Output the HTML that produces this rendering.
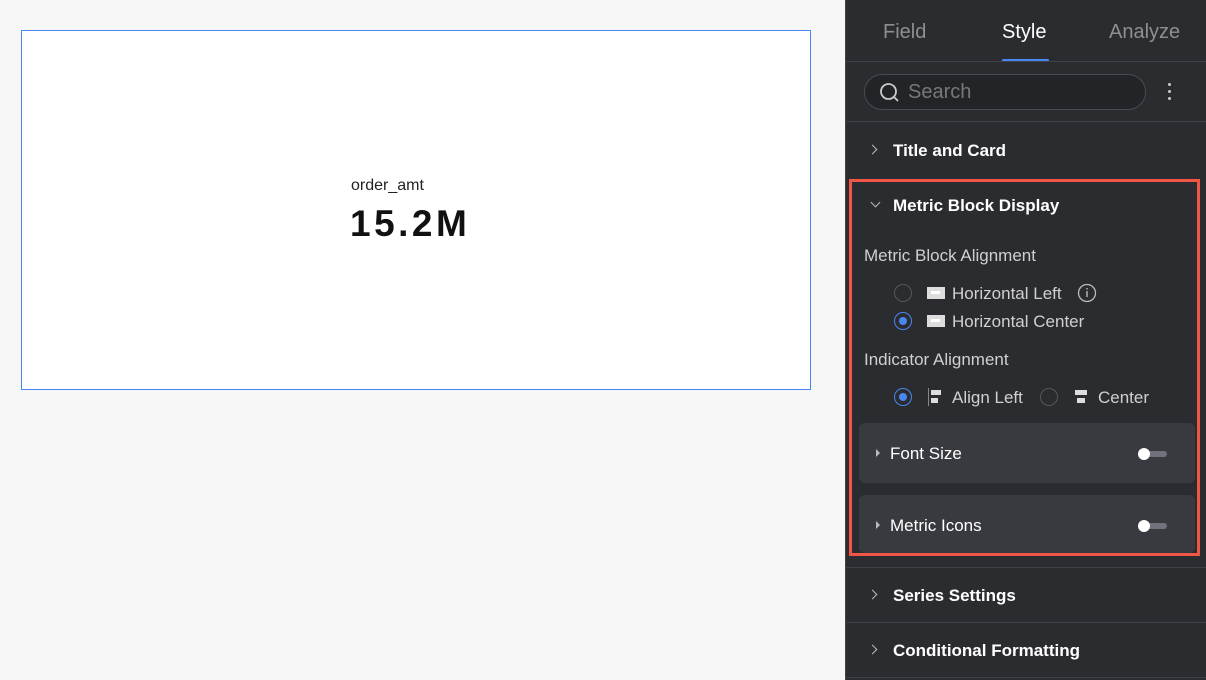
<!DOCTYPE html>
<html><head><style>
*{margin:0;padding:0;box-sizing:border-box}
body{width:1206px;height:680px;background:#f7f7f7;font-family:"Liberation Sans",sans-serif;position:relative;overflow:hidden}
.card{position:absolute;left:21px;top:30px;width:790px;height:360px;background:#fff;border:1px solid #4a86f0}
.lbl{position:absolute;left:329px;top:146px;font-size:16px;color:#222}
.val{position:absolute;left:328px;top:172px;font-size:37px;font-weight:bold;color:#111;letter-spacing:3.5px}
.panel{position:absolute;left:845px;top:0;width:361px;height:680px;background:#2b2c30;border-left:1px solid #444}
.abs{position:absolute}
.t{color:#fff;font-size:17px;font-weight:bold}
.g{color:#d0d0d2;font-size:17px}
.line{position:absolute;left:0;width:361px;height:1px;background:#404146}
.chev{position:absolute;width:7px;height:7px;border-right:1.5px solid #bbb;border-bottom:1.5px solid #bbb}
.radio{position:absolute;width:18px;height:18px;border-radius:50%;border:1px solid #55565a}
.radio.on{border:1.5px solid #4a86f0}
.radio.on:after{content:"";position:absolute;left:3.5px;top:3.5px;width:8px;height:8px;border-radius:50%;background:#4a86f0}
.sub{position:absolute;left:13px;width:336px;height:60px;background:#393a3f;border-radius:6px}
.tog{position:absolute;width:28px;height:6px;border-radius:3px;background:#70727c}
.tog:before{content:"";position:absolute;left:-1px;top:-3px;width:12px;height:12px;border-radius:50%;background:#fff}
.tri{position:absolute;width:0;height:0;border-left:4px solid #bbb;border-top:4px solid transparent;border-bottom:4px solid transparent}
.ico{position:absolute;width:18px;height:12px;background:#ddd}
.ico:after{content:"";position:absolute;left:4px;top:4px;width:9px;height:3px;background:#fff}
</style></head><body>
<div class="card"><div class="lbl">order_amt</div><div class="val">15.2M</div></div>
<div class="panel">
<div class="abs" style="left:37px;top:21px;font-size:20px;color:#8e8f93">Field</div>
<div class="abs" style="left:156px;top:21px;font-size:20px;color:#fff">Style</div>
<div class="abs" style="left:263px;top:21px;font-size:20px;color:#8e8f93">Analyze</div>
<div class="abs" style="left:156px;top:59px;width:47px;height:3px;background:#4a86f0;border-radius:2px"></div>
<div class="line" style="top:61px"></div>
<div class="abs" style="left:18px;top:74px;width:282px;height:36px;border:1px solid #4a4b50;border-radius:18px;background:#232428"></div>
<svg class="abs" style="left:33px;top:82px" width="22" height="22" viewBox="0 0 22 22"><circle cx="9.5" cy="9.5" r="7.5" fill="none" stroke="#ccc" stroke-width="1.8"/><path d="M15 15l4 4" stroke="#ccc" stroke-width="1.8"/></svg>
<div class="abs" style="left:62px;top:81px;font-size:20px;color:#77787c">Search</div>
<div class="abs" style="left:322px;top:83px;width:3px;height:3px;border-radius:50%;background:#ccc;box-shadow:0 7px 0 #ccc,0 14px 0 #ccc"></div>
<div class="line" style="top:121px"></div>
<div class="chev" style="left:23px;top:146px;transform:rotate(-45deg)"></div>
<div class="abs t" style="left:47px;top:141px">Title and Card</div>
<div class="abs" style="left:3px;top:179px;width:351px;height:377px;border:3px solid #f05545"></div>
<div class="chev" style="left:26px;top:199px;transform:rotate(45deg)"></div>
<div class="abs t" style="left:47px;top:196px">Metric Block Display</div>
<div class="abs g" style="left:18px;top:246px">Metric Block Alignment</div>
<div class="radio" style="left:48px;top:284px"></div>
<div class="ico" style="left:81px;top:287px"></div>
<div class="abs g" style="left:106px;top:284px">Horizontal Left</div>
<svg class="abs" style="left:231px;top:283px" width="20" height="20"><circle cx="10" cy="10" r="8.5" fill="none" stroke="#bbb" stroke-width="1.3"/><rect x="9.3" y="8" width="1.4" height="6" fill="#bbb"/><rect x="9.3" y="5" width="1.4" height="1.5" fill="#bbb"/></svg>
<div class="radio on" style="left:48px;top:312px"></div>
<div class="ico" style="left:81px;top:315px"></div>
<div class="abs g" style="left:106px;top:312px">Horizontal Center</div>
<div class="abs g" style="left:18px;top:350px">Indicator Alignment</div>
<div class="radio on" style="left:48px;top:388px"></div>
<svg class="abs" style="left:82px;top:388px" width="16" height="18"><rect x="0" y="0" width="1" height="18" fill="#888"/><rect x="3" y="2" width="10" height="5" fill="#ddd"/><rect x="3" y="10" width="7" height="5" fill="#ddd"/></svg>
<div class="abs g" style="left:106px;top:388px">Align Left</div>
<div class="radio" style="left:194px;top:388px"></div>
<svg class="abs" style="left:228px;top:388px" width="16" height="18"><rect x="1" y="2" width="12" height="5" fill="#ddd"/><rect x="3" y="10" width="8" height="5" fill="#ddd"/></svg>
<div class="abs g" style="left:252px;top:388px">Center</div>
<div class="sub" style="top:423px"></div>
<div class="tri" style="left:30px;top:449px"></div>
<div class="abs" style="left:44px;top:444px;font-size:17px;color:#fff">Font Size</div>
<div class="tog" style="left:293px;top:451px"></div>
<div class="sub" style="top:495px;height:58px"></div>
<div class="tri" style="left:30px;top:521px"></div>
<div class="abs" style="left:44px;top:516px;font-size:17px;color:#fff">Metric Icons</div>
<div class="tog" style="left:293px;top:523px"></div>
<div class="line" style="top:567px"></div>
<div class="chev" style="left:23px;top:591px;transform:rotate(-45deg)"></div>
<div class="abs t" style="left:47px;top:586px">Series Settings</div>
<div class="line" style="top:622px"></div>
<div class="chev" style="left:23px;top:646px;transform:rotate(-45deg)"></div>
<div class="abs t" style="left:47px;top:641px">Conditional Formatting</div>
<div class="line" style="top:677px"></div>
</div>
</body></html>
